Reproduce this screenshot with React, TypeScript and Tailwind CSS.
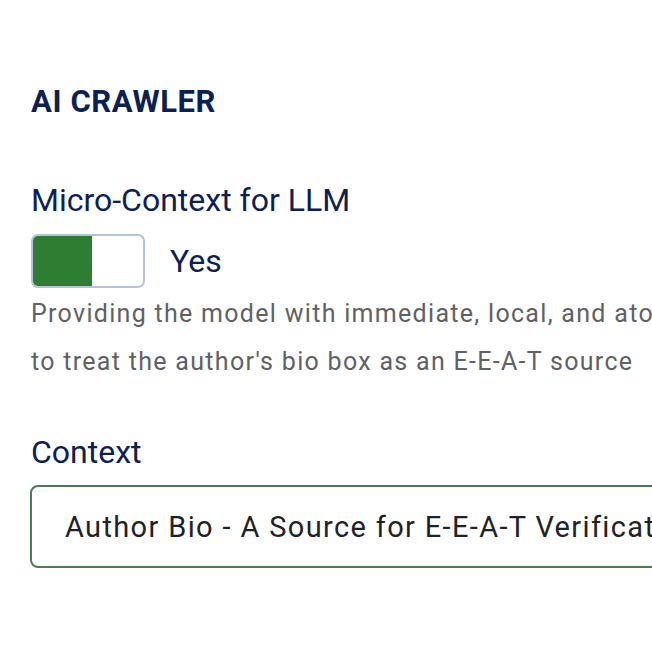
export default function App() {
  return (
    <div className="w-[652px] h-[652px] overflow-hidden bg-white font-['Roboto',sans-serif]">
      <div className="pl-[31px] pt-[82px]">
        <h2 className="text-[31px] leading-[40px] font-bold text-[#0b2154] tracking-[0.6px]">AI CRAWLER</h2>

        <div className="mt-[58px] text-[32px] leading-[40px] text-[#0b2154]">Micro-Context for LLM</div>

        <div className="mt-[14px] flex items-center gap-[25px]">
          <div className="flex w-[114px] h-[54px] rounded-[7px] border-2 border-[#b3c5dd] overflow-hidden bg-white">
            <div className="w-[59px] h-full bg-[#2e7d32]" />
          </div>
          <span className="text-[32px] leading-[40px] text-[#0b2154]">Yes</span>
        </div>

        <p className="mt-[2px] w-[760px] text-[25px] leading-[48px] tracking-[1.3px] text-[#5f6163] whitespace-nowrap">
          Providing the model with immediate, local, and atomic information
          <br />
          to treat the author's bio box as an E-E-A-T source
        </p>

        <div className="mt-[46px] text-[32px] leading-[40px] text-[#0b2154]">Context</div>

        <div className="mt-[13px] -ml-px w-[760px] h-[83px] rounded-[8px] border-2 border-[#4b7d52] flex items-center pl-[33px] text-[29px] leading-[40px] tracking-[1.35px] text-[#1f2226] whitespace-nowrap">
          Author Bio - A Source for E-E-A-T Verification
        </div>
      </div>
    </div>
  );
}
